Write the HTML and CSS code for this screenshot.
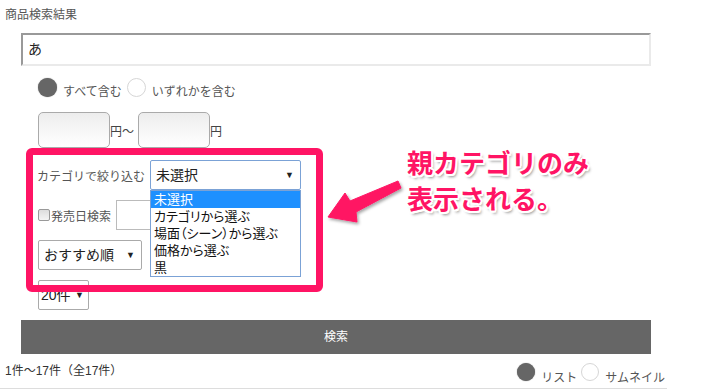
FILE: index.html
```html
<!DOCTYPE html>
<html lang="ja">
<head>
    <meta charset="UTF-8">
    <meta name="viewport" content="width=device-width, initial-scale=1.0">
    <title>商品検索結果</title>
    <link rel="stylesheet" href="styles.css">
</head>
<body>
    <h1 class="title">商品検索結果</h1>

    <div class="keyword">あ</div>

    <!-- 検索条件 -->
    <div class="match-row">
        <span class="radio checked"></span><span class="radio-label">すべて含む</span>
        <span class="radio"></span><span class="radio-label">いずれかを含む</span>
    </div>

    <div class="price-row">
        <span class="price-box"></span><span class="unit">円～</span>
        <span class="price-box"></span><span class="unit">円</span>
    </div>

    <div class="category-row">
        <span class="field-label">カテゴリで絞り込む</span>
        <div class="select select-focus category-select">未選択<span class="caret">▼</span></div>
    </div>

    <div class="date-row">
        <span class="checkbox"></span><span class="field-label">発売日検索</span>
        <span class="date-box"></span>
    </div>

    <div class="sort-row">
        <div class="select sort-select">おすすめ順<span class="caret">▼</span></div>
    </div>

    <div class="count-row">
        <div class="select count-select">20件<span class="caret">▼</span></div>
    </div>

    <div class="search-btn">検索</div>

    <div class="result-row">
        <span class="result-count">1件～17件（全17件）</span>
        <div class="view-switch">
            <span class="radio checked small"></span><span class="radio-label">リスト</span>
            <span class="radio small"></span><span class="radio-label">サムネイル</span>
        </div>
    </div>

    <!-- 開いたプルダウン -->
    <ul class="dropdown">
        <li class="active">未選択</li>
        <li>カテゴリから選ぶ</li>
        <li>場面（シーン）から選ぶ</li>
        <li>価格から選ぶ</li>
        <li>黒</li>
    </ul>

    <!-- 注釈 -->
    <div class="note-frame"></div>
    <svg class="note-arrow" width="726" height="391" viewBox="0 0 726 391">
        <defs>
            <filter id="shadow" x="-20%" y="-20%" width="140%" height="140%">
                <feDropShadow dx="1.5" dy="2" stdDeviation="1.5" flood-color="#000" flood-opacity="0.35"/>
            </filter>
        </defs>
        <polygon filter="url(#shadow)" fill="#ff1464" stroke="#ff1464" stroke-width="1" stroke-linejoin="round"
            points="328,217 345,193 350,201 398,181 401,188 356,212 357,222"/>
    </svg>
    <div class="note-text">親カテゴリのみ<br>表示される。</div>
</body>
</html>
```

FILE: styles.css
```css
body {
    margin: 0;
    font-family: "Liberation Sans", "Noto Sans CJK JP", sans-serif;
    font-size: 12px;
    color: #444;
    position: relative;
    width: 726px;
    height: 391px;
    overflow: hidden;
}

.title {
    margin: 0;
    padding: 6px 5px 9px;
    font-size: 12px;
    font-weight: normal;
    line-height: 18px;
    color: #555;
}

.keyword {
    box-sizing: border-box;
    margin-left: 21px;
    width: 630px;
    height: 33px;
    padding-left: 5px;
    border: 2px solid;
    border-color: #999 #eaeaea #eaeaea #999;
    font-size: 14px;
    line-height: 29px;
    color: #222;
}

/* Radio rows */
.match-row {
    display: flex;
    align-items: flex-end;
    height: 22px;
    margin: 12px 0 0 38px;
}
.radio {
    box-sizing: border-box;
    width: 19px;
    height: 19px;
    margin-bottom: 3px;
    border-radius: 50%;
    border: 1px solid #d6d6d6;
    background: #fff;
}
.radio.checked {
    border: none;
    background: #666;
    box-shadow: 0 0 1px #666;
}
.radio-label {
    margin: 0 5px 0 6px;
    line-height: 16px;
    color: #555;
}

.price-row {
    display: flex;
    align-items: center;
    margin: 12px 0 0 38px;
    height: 36px;
}
.price-box {
    box-sizing: border-box;
    width: 72px;
    height: 36px;
    border: 1px solid #aaa;
    border-radius: 5px;
    background: linear-gradient(#ededed, #fafafa 70%, #fff);
}
.unit {
    margin-right: 4px;
    color: #444;
}

/* Selects */
.select {
    box-sizing: border-box;
    position: relative;
    height: 30px;
    padding-left: 5px;
    border: 1px solid #aaa;
    border-radius: 2px;
    font-size: 14px;
    line-height: 28px;
    color: #222;
    background: #fff;
}
.select-focus {
    border-color: #7ba2d6;
}
.caret {
    position: absolute;
    right: 6px;
    top: 0;
    font-size: 9px;
    color: #222;
}

.category-row {
    display: flex;
    align-items: center;
    margin: 12px 0 0 37px;
    height: 30px;
}
.field-label {
    color: #555;
}
.category-select {
    width: 151px;
    margin-left: 5px;
}

.date-row {
    display: flex;
    align-items: center;
    margin: 10px 0 0 38px;
    height: 30px;
}
.checkbox {
    box-sizing: border-box;
    width: 12px;
    height: 12px;
    margin-right: 1px;
    border: 1px solid #999;
    border-radius: 2px;
    background: linear-gradient(#ddd, #f4f4f4);
}
.date-box {
    box-sizing: border-box;
    width: 150px;
    height: 30px;
    margin-left: 5px;
    border: 1px solid #bbb;
}

.sort-row {
    margin: 10px 0 0 38px;
}
.sort-select {
    width: 104px;
}

.count-row {
    margin: 10px 0 0 38px;
}
.count-select {
    width: 51px;
    padding-left: 2px;
}
.count-select .caret {
    right: 4px;
}

.search-btn {
    margin: 10px 0 0 21px;
    width: 630px;
    height: 34px;
    background: #666;
    color: #fff;
    text-align: center;
    line-height: 34px;
}

.result-row {
    box-sizing: border-box;
    display: flex;
    justify-content: space-between;
    width: 667px;
    height: 35px;
    padding-left: 5px;
    border-bottom: 1px solid #ddd;
}
.result-count {
    margin-top: 8px;
    line-height: 18px;
    color: #333;
}
.view-switch {
    display: flex;
    align-items: flex-end;
    height: 33px;
}
.view-switch .radio {
    width: 18px;
    height: 18px;
    margin-bottom: 6px;
}
.view-switch .radio-label {
    margin: 0 4px 0 6px;
    line-height: 18px;
}
.view-switch .radio-label:last-child {
    margin-right: 2px;
}

/* Open dropdown list */
.dropdown {
    position: absolute;
    left: 150px;
    top: 190px;
    box-sizing: border-box;
    width: 151px;
    margin: 0;
    padding: 0;
    list-style: none;
    border: 1px solid #7ba2d6;
    background: #fff;
}
.dropdown li {
    height: 17px;
    padding-left: 3px;
    font-size: 13px;
    line-height: 17px;
    color: #111;
    font-feature-settings: "palt";
    white-space: nowrap;
}
.dropdown li.active {
    background: #1e90ff;
    color: #fff;
}

/* Annotation */
.note-frame {
    position: absolute;
    left: 26px;
    top: 148px;
    box-sizing: border-box;
    width: 297px;
    height: 144px;
    border: 7px solid #ff1464;
    border-radius: 6px;
}
.note-arrow {
    position: absolute;
    left: 0;
    top: 0;
    pointer-events: none;
}
.note-text {
    position: absolute;
    left: 407px;
    top: 144px;
    font-family: "Noto Sans CJK JP", sans-serif;
    font-size: 26px;
    font-weight: bold;
    line-height: 36px;
    color: #ff1464;
    text-shadow:
        -2px 0 0 #fff, 2px 0 0 #fff, 0 -2px 0 #fff, 0 2px 0 #fff,
        -1.5px -1.5px 0 #fff, 1.5px -1.5px 0 #fff, -1.5px 1.5px 0 #fff, 1.5px 1.5px 0 #fff,
        2px 3px 3px rgba(0, 0, 0, 0.45);
}
```
